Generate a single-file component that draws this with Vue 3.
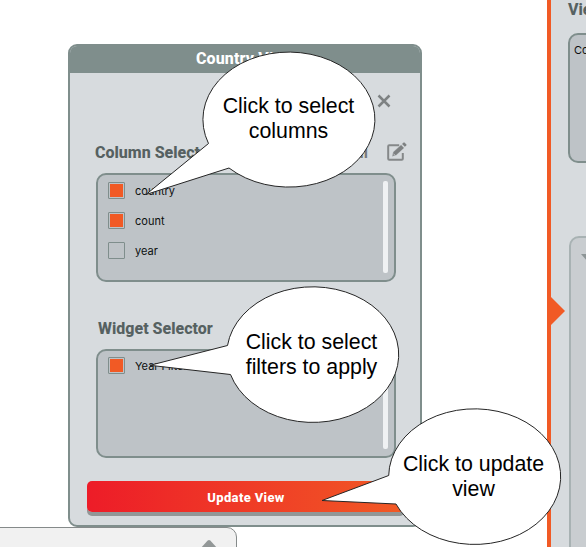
<script setup>
const columns = [
  { name: 'country', checked: true },
  { name: 'count', checked: true },
  { name: 'year', checked: false },
]
const widgets = [{ name: 'Year Filter', checked: true }]
const callouts = [
  { id: 'for-columns', lines: ['Click to select', 'columns'], path: 'M208.5 143.5A86 67.5 0 1 1 229 168L146 194.5Z' },
  { id: 'for-filters', lines: ['Click to select', 'filters to apply'], path: 'M227.5 345.5A86 67.8 0 1 1 230.5 374.5L150 365.3Z' },
  { id: 'for-update', lines: ['Click to update', 'view'], path: 'M388.7 475.5A86 67.8 0 1 1 396 504L322 500.5Z' },
]
</script>

<template>
  <main class="screen">
    <section class="dialog">
      <header class="title">Country View</header>
      <div class="content">
        <div class="close-row">
          <svg class="close" viewBox="0 0 14 14"><path d="M1.5 1.5l11 11M12.5 1.5l-11 11" /></svg>
        </div>
        <div class="heading first">
          <h2>Column Selector</h2>
          <span class="all">All</span>
          <svg class="edit" viewBox="0 0 20 19">
            <path class="sheet" d="M12.2 3.2H2.2Q1.2 3.2 1.2 4.2V16.8Q1.2 17.8 2.2 17.8H14.8Q15.8 17.8 15.8 16.8V11" />
            <path class="pencil" d="M5 14.4l1.1-4.3 8-7.4 3.1 3.2-8 7.4zM14.8 2l1.5-1.5q.7-.6 1.4 0l1.7 1.7q.6.7 0 1.4L17.9 5.1z" />
            <path class="shine" d="M6.4 11.7l1.5 1.5" />
          </svg>
        </div>
        <div class="list columns">
          <div class="items">
            <label v-for="item in columns" :key="item.name" class="item">
              <span class="box" :class="{ checked: item.checked }"></span>{{ item.name }}
            </label>
          </div>
          <span class="scrollbar"></span>
        </div>
        <div class="heading second"><h2>Widget Selector</h2></div>
        <div class="list">
          <div class="items">
            <label v-for="item in widgets" :key="item.name" class="item">
              <span class="box" :class="{ checked: item.checked }"></span>{{ item.name }}
            </label>
          </div>
          <span class="scrollbar"></span>
        </div>
        <button class="update">Update View</button>
      </div>
    </section>

    <aside class="drawer">
      <h2>View</h2>
      <div class="drawer-list">Country</div>
      <div class="drawer-panel">
        <svg viewBox="0 0 14 8"><path d="M0 0H14L7 8Z" /></svg>
      </div>
      <span class="arrow"></span>
    </aside>

    <footer class="tray">
      <svg viewBox="0 0 20 10"><path d="M1 10L8.7 1.5Q10 .3 11.3 1.5L19 10Z" /></svg>
    </footer>

    <svg class="bubbles" viewBox="0 0 586 547">
      <path v-for="c in callouts" :key="c.id" :d="c.path" />
    </svg>
    <p v-for="c in callouts" :key="c.id" class="callout" :class="c.id">
      <span v-for="line in c.lines" :key="line">{{ line }}</span>
    </p>
  </main>
</template>

<style>
body { margin: 0; }
</style>

<style scoped>
* { box-sizing: border-box; }
.screen {
  position: relative;
  width: 586px;
  height: 547px;
  overflow: hidden;
  background: #fff;
  color: #0c0f0f;
  font-family: Inter, "Liberation Sans", sans-serif;
}
h2 {
  margin: 0;
  color: #566161;
  font: 800 16px/20px Roboto, sans-serif;
}
.dialog {
  position: absolute;
  left: 68px;
  top: 44px;
  width: 354px;
  height: 483px;
  border: 2px solid #7f8e8c;
  border-radius: 9px;
  background: #d7dbde;
  overflow: hidden;
}
.title {
  height: 27px;
  background: #7f8e8c;
  color: #fff;
  text-align: center;
  letter-spacing: .15px;
  font: 800 16px/25px Roboto, sans-serif;
}
.content { padding: 0 17px; }
.close-row {
  display: flex;
  justify-content: flex-end;
  padding: 21px 12px 0 0;
}
.close { width: 14px; height: 14px; fill: none; stroke: #7e8283; stroke-width: 2.5; }
.heading { display: flex; align-items: center; height: 20px; }
.first { margin-top: 35px; padding-left: 8px; }
.second { margin-top: 37px; padding-left: 11px; }
.all { margin-left: auto; color: #777b7c; font: 700 16px/20px Roboto, sans-serif; }
.edit { width: 20px; height: 19px; margin: -3px -4px 0 19px; }
.sheet { fill: none; stroke: #858889; stroke-width: 2; }
.pencil { fill: #7e8182; stroke: #d7dbde; stroke-width: .4; }
.shine { fill: none; stroke: #d7dbde; stroke-width: .8; }
.list {
  display: flex;
  justify-content: space-between;
  width: 300px;
  height: 109px;
  margin: 10px 0 0 9px;
  padding: 6px 6px 6px 10px;
  border: 2px solid #7f8e8c;
  border-radius: 10px;
  background: #bec3c7;
}
.items { display: flex; flex-direction: column; gap: 13px; }
.columns .items { padding-top: 1px; }
.item { display: flex; align-items: center; gap: 10px; height: 17px; font-size: 11px; }
.box {
  width: 17px;
  height: 17px;
  border: 1px solid #7f8e8c;
  border-radius: 1px;
}
.checked { padding: 1px; background: #f15a25 content-box; }
.scrollbar { width: 5px; height: 92px; border-radius: 2px; background: #eff1f3; }
.update {
  display: block;
  width: 318px;
  height: 31px;
  margin: 23px 0 0;
  padding: 0;
  border: 0;
  border-radius: 5px;
  background: linear-gradient(90deg, #ed1c28, #f15a25);
  box-shadow: 0 4px #929797;
  color: #fff;
  font: 800 13px/33px Roboto, sans-serif;
  letter-spacing: .35px;
}
.drawer {
  position: absolute;
  left: 547px;
  top: 0;
  width: 39px;
  height: 547px;
  padding-left: 17px;
  border-left: 4px solid #f15a25;
  background: #d7dbde;
  overflow: hidden;
}
.drawer h2 { white-space: nowrap; }
.drawer-list {
  width: 80px;
  height: 130px;
  margin-top: 13px;
  padding: 9px 4px;
  border: 2px solid #7f8e8c;
  border-radius: 10px;
  background: #bec3c7;
  font-size: 11px;
  line-height: 13px;
}
.drawer-panel {
  width: 80px;
  height: 400px;
  margin: 73px 0 0 1px;
  padding: 16px 10px;
  border: 2px solid #a8b2b3;
  border-radius: 10px;
  background: #c9cdd0;
}
.drawer-panel svg { display: block; width: 14px; height: 8px; fill: #8d9596; }
.arrow {
  position: absolute;
  left: 0;
  top: 297px;
  border: solid transparent;
  border-width: 14px 0 14px 14px;
  border-left-color: #f15a25;
}
.tray {
  position: absolute;
  left: -10px;
  top: 527px;
  display: flex;
  justify-content: flex-end;
  width: 247px;
  height: 40px;
  padding: 11px 17px 0 0;
  border: 1px solid #858a8a;
  border-radius: 10px;
  background: #f1f1f1;
}
.tray svg { width: 20px; height: 10px; fill: #929797; }
.bubbles {
  position: absolute;
  left: 0;
  top: 0;
  width: 586px;
  height: 547px;
  fill: #fff;
  stroke: #252525;
}
.callout {
  position: absolute;
  display: flex;
  flex-direction: column;
  align-items: center;
  width: 172px;
  margin: 0;
  color: #000;
  font: 21.33px/25px "Liberation Sans", sans-serif;
  white-space: nowrap;
}
.for-columns { left: 202.5px; top: 94px; }
.for-filters { left: 225.5px; top: 330px; }
.for-update { left: 387.5px; top: 452px; }
</style>
